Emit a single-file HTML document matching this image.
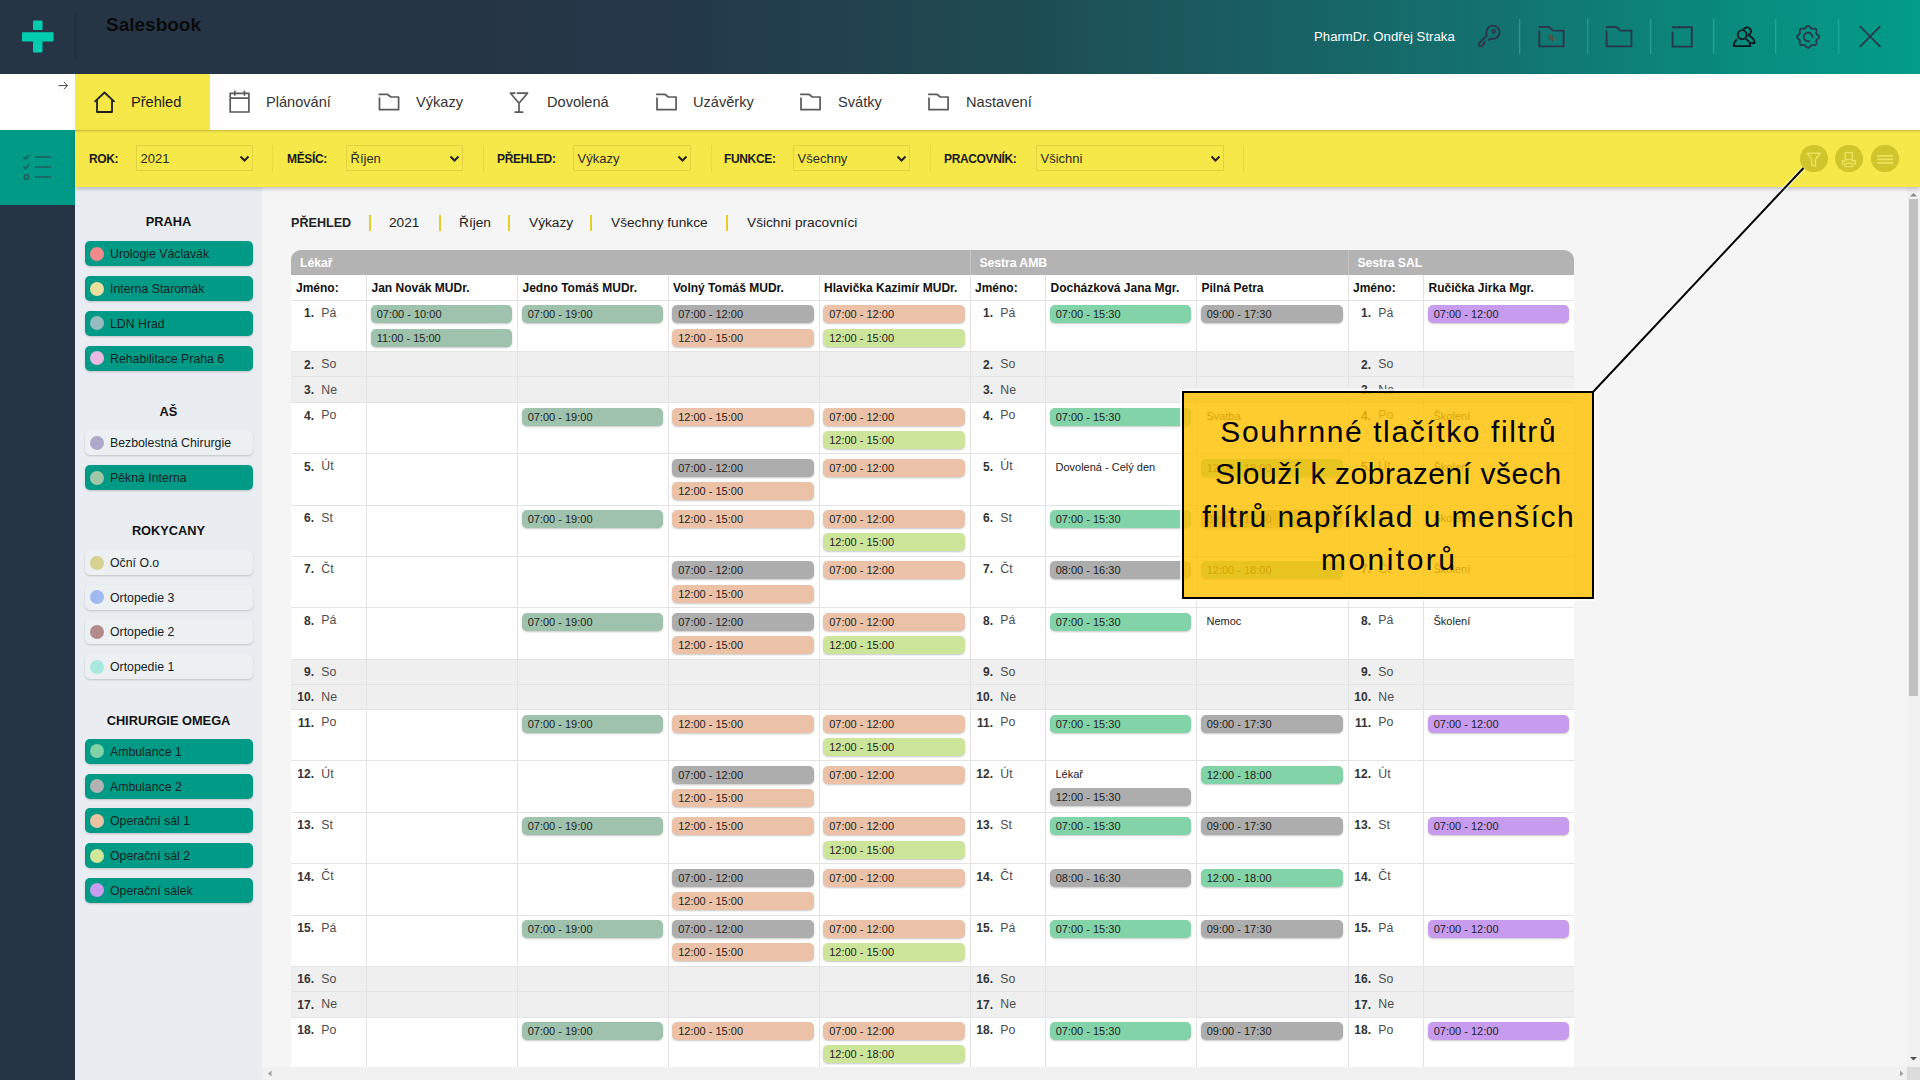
<!DOCTYPE html><html><head><meta charset="utf-8"><style>
*{box-sizing:border-box;margin:0;padding:0}
html,body{width:1920px;height:1080px;overflow:hidden;background:#f5f5f5;font-family:"Liberation Sans",sans-serif;color:#222}
.a{position:absolute}
#hdr{left:0;top:0;width:1920px;height:74px;background:linear-gradient(90deg,#263545 0%,#263545 24%,#24394a 36%,#1f4a52 52%,#137270 78%,#0a887c 88.5%,#039d89 100%)}
#nav{left:0;top:74px;width:1920px;height:56px;background:#fff}
#teal{left:0;top:130px;width:75px;height:75px;background:#009a86}
#side{left:0;top:205px;width:75px;height:875px;background:#263545}
#panel{left:75px;top:187px;width:187px;height:893px;background:#e9edf1}
#filter{left:75px;top:130px;width:1845px;height:57px;background:#f7e84a;box-shadow:0 2px 4px rgba(0,0,0,.22), inset 0 3px 3px -2px rgba(0,0,0,.22)}
.navt{font-size:14.6px;color:#333;top:94.2px;white-space:nowrap}
.flab{font-size:12px;font-weight:bold;color:#1a1a1a;top:152px;letter-spacing:-0.35px;white-space:nowrap}
.sel{top:145px;height:26px;border:1px solid #e2d141;font-size:13px;color:#2a2a2a;padding:4.7px 0 0 3.5px;white-space:nowrap}
.sel svg{position:absolute;right:2px;top:8.6px}
.fdiv{top:145px;width:1px;height:27px;background:#e9d940}
.cbtn{top:144.7px;width:27.8px;height:27.8px;border-radius:50%;background:#d0c52b;box-shadow:0 0 1px rgba(0,0,0,.06)}
.ghead{font-size:12.8px;font-weight:bold;color:#111;text-align:center;left:75px;width:187px;white-space:nowrap}
.item{left:85px;width:168px;height:25px;border-radius:5px;font-size:12.3px;color:#132323;white-space:nowrap;padding:6px 0 0 25px;box-shadow:0 1px 2px rgba(0,0,0,.18)}
.item.t{background:#009a86}
.item.l{background:#edf0f3}
.item i{position:absolute;left:5px;top:5.6px;width:14px;height:14px;border-radius:50%}
.bc{top:215px;font-size:13.7px;color:#222;white-space:nowrap}
.bsep{top:215px;width:2px;height:16px;background:#e3cf2c}
#tbl{left:291px;top:250px;width:1283px;height:817px;background:#fff}
.gh{top:0;height:25px;background:#b3b3b3;color:#fff;font-weight:bold;font-size:12.3px;padding:7px 0 0 9px;white-space:nowrap}
.nh{top:25px;height:25px;font-weight:bold;font-size:12px;color:#111;padding:6px 0 0 5px;white-space:nowrap}
.vl{width:1px;background:#e3e3e3}
.hl{height:1px;background:#e3e3e3}
.we{background:#efefef}
.dn{font-size:12px;font-weight:bold;color:#333;text-align:right;width:22px;white-space:nowrap}
.dd{font-size:12.3px;color:#4d4d4d;white-space:nowrap}
.ch{height:18px;border-radius:5px;font-size:11px;color:#222;padding:3px 0 0 6px;white-space:nowrap;box-shadow:0 1px 2px rgba(0,0,0,.22)}
.tx{font-size:11px;color:#222;white-space:nowrap}
</style></head><body><div id="hdr" class="a"></div>
<svg class="a" style="left:0;top:0" width="80" height="74"><rect x="33" y="20.6" width="9.5" height="9.4" rx="1" fill="#00cdb0"/><rect x="22" y="32.2" width="31.6" height="9.3" rx="1" fill="#00cdb0"/><rect x="33" y="41" width="9.5" height="11.5" rx="1" fill="#00cdb0"/><rect x="75" y="13" width="1" height="46" fill="#1d2b38"/></svg>
<div class="a" style="left:106px;top:13.5px;font-size:19px;font-weight:bold;color:#0b0b0b;white-space:nowrap">Salesbook</div>
<div class="a" style="left:1314px;top:28.8px;font-size:13.2px;color:#fff;white-space:nowrap">PharmDr. Ondřej Straka</div>
<svg class="a" style="left:0;top:0" width="1920" height="74"><path d="M1488.6 39.9 C1490 39 1491.6 38.7 1493 38.8 A6.6 6.6 0 1 0 1486.4 32.4 C1486.4 33.5 1486.6 34.5 1486.9 35.5 L1479 43.3 C1478.4 44.2 1478.6 46.3 1480.6 46.4 L1482.4 46.2 L1482.6 44.6 L1484.4 43.9 L1484.4 41.8" fill="none" stroke="#283848" stroke-width="1.9" stroke-linejoin="round" stroke-linecap="round"/><circle cx="1493.5" cy="31.3" r="1.6" fill="none" stroke="#283848" stroke-width="1.6"/><path d="M1539.3 27 L1548.1 27 C1549 27 1549.6 27.3 1550.2 27.9 L1552.6 30.2 C1553 30.5 1553.4 30.6 1554 30.6 L1563.6 30.6 L1563.6 46.4 L1539.3 46.4 L1539.3 31.5" fill="none" stroke="#283848" stroke-width="1.9" stroke-linejoin="round" stroke-linecap="round"/><text x="1548.4" y="41.4" font-family="Liberation Sans" font-weight="bold" font-size="8.2" fill="#7a3b2b">N</text><path d="M1606.6 27 L1615.6 27 C1616.5 27 1617.1 27.3 1617.7 27.9 L1620.1 30.2 C1620.5 30.5 1620.9 30.6 1621.5 30.6 L1631.4 30.6 L1631.4 46.4 L1606.6 46.4 L1606.6 31.5" fill="none" stroke="#283848" stroke-width="1.9" stroke-linejoin="round" stroke-linecap="round"/><path d="M1672.6 27.2 L1691.8 27.2 L1691.8 46.6 L1672.6 46.6 L1672.6 32.2" fill="none" stroke="#283848" stroke-width="1.9" stroke-linecap="round"/><g fill="none" stroke="#0a181c" stroke-width="1.8" stroke-linecap="round" stroke-linejoin="round"><circle cx="1742.2" cy="34.7" r="4.5"/><path d="M1743.8 28.9 A4 4 0 1 1 1748.2 35.1"/><path d="M1736.5 39.6 C1734.6 41.3 1733.8 43.5 1733.8 46.2 L1750.4 46.2 C1750.3 43.5 1749 41 1746.2 39.2"/><path d="M1749.4 35.9 C1752.5 37.3 1754.5 40 1754.6 43.1 L1750.4 43.1"/></g><path d="M1808.10 25.85 L1808.81 26.01 L1809.47 26.47 L1810.05 27.09 L1810.55 27.75 L1811.02 28.29 L1811.53 28.63 L1812.12 28.75 L1812.84 28.69 L1813.66 28.59 L1814.51 28.55 L1815.29 28.70 L1815.91 29.09 L1816.30 29.71 L1816.45 30.49 L1816.41 31.34 L1816.31 32.16 L1816.25 32.88 L1816.37 33.47 L1816.71 33.98 L1817.25 34.45 L1817.91 34.95 L1818.53 35.53 L1818.99 36.19 L1819.15 36.90 L1818.99 37.61 L1818.53 38.27 L1817.91 38.85 L1817.25 39.35 L1816.71 39.82 L1816.37 40.33 L1816.25 40.92 L1816.31 41.64 L1816.41 42.46 L1816.45 43.31 L1816.30 44.09 L1815.91 44.71 L1815.29 45.10 L1814.51 45.25 L1813.66 45.21 L1812.84 45.11 L1812.12 45.05 L1811.53 45.17 L1811.02 45.51 L1810.55 46.05 L1810.05 46.71 L1809.47 47.33 L1808.81 47.79 L1808.10 47.95 L1807.39 47.79 L1806.73 47.33 L1806.15 46.71 L1805.65 46.05 L1805.18 45.51 L1804.67 45.17 L1804.08 45.05 L1803.36 45.11 L1802.54 45.21 L1801.69 45.25 L1800.91 45.10 L1800.29 44.71 L1799.90 44.09 L1799.75 43.31 L1799.79 42.46 L1799.89 41.64 L1799.95 40.92 L1799.83 40.33 L1799.49 39.82 L1798.95 39.35 L1798.29 38.85 L1797.67 38.27 L1797.21 37.61 L1797.05 36.90 L1797.21 36.19 L1797.67 35.53 L1798.29 34.95 L1798.95 34.45 L1799.49 33.98 L1799.83 33.47 L1799.95 32.88 L1799.89 32.16 L1799.79 31.34 L1799.75 30.49 L1799.90 29.71 L1800.29 29.09 L1800.91 28.70 L1801.69 28.55 L1802.54 28.59 L1803.36 28.69 L1804.08 28.75 L1804.67 28.63 L1805.18 28.29 L1805.65 27.75 L1806.15 27.09 L1806.73 26.47 L1807.39 26.01 L1808.10 25.85 Z" fill="none" stroke="#283848" stroke-width="1.8" stroke-linejoin="round"/><path d="M1812.4 37 A4.3 4.3 0 1 0 1809.3 41.1" fill="none" stroke="#283848" stroke-width="1.8" stroke-linecap="round"/><path d="M1860.3 26.6 L1879.9 46.4 M1879.9 26.6 L1860.3 46.4" stroke="#283848" stroke-width="1.7" stroke-linecap="round"/><rect x="1519" y="19" width="1.3" height="35" fill="#35b8a6" opacity=".55"/><rect x="1587" y="19" width="1.3" height="35" fill="#35b8a6" opacity=".55"/><rect x="1650" y="19" width="1.3" height="35" fill="#35b8a6" opacity=".55"/><rect x="1713" y="19" width="1.3" height="35" fill="#35b8a6" opacity=".55"/><rect x="1775" y="19" width="1.3" height="35" fill="#35b8a6" opacity=".55"/><rect x="1838" y="19" width="1.3" height="35" fill="#35b8a6" opacity=".55"/></svg>
<div id="nav" class="a"></div>
<div class="a" style="left:75px;top:74px;width:135px;height:56px;background:#f7e84a"></div>
<svg class="a" style="left:0;top:74px" width="80" height="30"><path d="M58.5 11.6 L67.5 11.6 M64 8 L67.5 11.6 L64 15.2" fill="none" stroke="#444" stroke-width="1"/></svg>
<svg class="a" style="left:0;top:74px" width="1100" height="56"><path d="M94.6 27.8 L104.5 18.5 L114.5 27.8 M97 25.5 L97 38 L112 38 L112 25.5" fill="none" stroke="#1f1f1f" stroke-width="1.8" stroke-linejoin="round"/><g fill="none" stroke="#5a5a5a" stroke-width="1.7" stroke-linecap="round"><path d="M230.2 28.6 L230.2 19.3 L248.9 19.3 L248.9 38 L230.2 38 L230.2 28.6 M230.2 24.1 L248.9 24.1 M234.8 17.3 L234.8 20.9 M244.4 17.3 L244.4 20.9"/></g><path d="M379.3 20.3 L387.3 20.3 L390.9 23 L398.6 23 L398.6 35.7 L379.5 35.7 L379.5 24" fill="none" stroke="#5a5a5a" stroke-width="1.7" stroke-linejoin="round" stroke-linecap="round"/><path d="M510.4 19.1 L514.9 19.1 M517.5 19.1 L527.6 19.1 M510.6 19.3 L519 29.2 L527.4 19.3 M519 29.2 L519 38.1 M515.1 38.1 L522.7 38.1" fill="none" stroke="#5a5a5a" stroke-width="1.7" stroke-linecap="round" stroke-linejoin="round"/><path d="M656.8 20.3 L664.8 20.3 L668.4 23 L676.1 23 L676.1 35.7 L657.0 35.7 L657.0 24" fill="none" stroke="#5a5a5a" stroke-width="1.7" stroke-linejoin="round" stroke-linecap="round"/><path d="M800.8 20.3 L808.8 20.3 L812.4 23 L820.1 23 L820.1 35.7 L801.0 35.7 L801.0 24" fill="none" stroke="#5a5a5a" stroke-width="1.7" stroke-linejoin="round" stroke-linecap="round"/><path d="M928.8 20.3 L936.8 20.3 L940.4 23 L948.1 23 L948.1 35.7 L929.0 35.7 L929.0 24" fill="none" stroke="#5a5a5a" stroke-width="1.7" stroke-linejoin="round" stroke-linecap="round"/></svg>
<div class="a navt" style="left:131px;color:#1a1a1a">Přehled</div>
<div class="a navt" style="left:266px;color:#333">Plánování</div>
<div class="a navt" style="left:416px;color:#333">Výkazy</div>
<div class="a navt" style="left:547px;color:#333">Dovolená</div>
<div class="a navt" style="left:693px;color:#333">Uzávěrky</div>
<div class="a navt" style="left:838px;color:#333">Svátky</div>
<div class="a navt" style="left:966px;color:#333">Nastavení</div>
<div id="teal" class="a"></div>
<div id="side" class="a"></div>
<svg class="a" style="left:0;top:130px" width="75" height="75"><g fill="none" stroke="#1e5f5a" stroke-width="1.6"><path d="M23.5 27 L25.5 29 L29 25 M23.5 36.5 L25.5 38.5 L29 34.5"/><circle cx="26.5" cy="47" r="2.3"/><path d="M35 27 L51.5 27 M35 37 L51.5 37 M35 47 L51.5 47"/></g></svg>
<div id="panel" class="a"></div>
<div class="a" style="left:1907px;top:187px;width:13px;height:880px;background:#f1f1f1"></div>
<div class="a" style="left:1909px;top:199px;width:9px;height:497px;background:#c1c1c1"></div>
<svg class="a" style="left:1907px;top:187px" width="13" height="880"><path d="M3 9.5 L6.5 6 L10 9.5 Z" fill="#8a8a8a"/><path d="M3 870 L6.5 873.5 L10 870 Z" fill="#505050"/></svg>
<div class="a" style="left:262px;top:1067px;width:1645px;height:13px;background:#f1f1f1"></div>
<div class="a" style="left:1907px;top:1067px;width:13px;height:13px;background:#dcdcdc"></div>
<svg class="a" style="left:262px;top:1067px" width="1645" height="13"><path d="M9.5 3.5 L6 6.5 L9.5 9.5 Z" fill="#a0a0a0"/><path d="M1638 3.5 L1641.5 6.5 L1638 9.5 Z" fill="#a0a0a0"/></svg>
<div id="filter" class="a"></div>
<div class="a flab" style="left:89px">ROK:</div>
<div class="a sel" style="left:136px;width:117px">2021<svg width="11" height="8"><path d="M1.5 1.5 L5.5 5.5 L9.5 1.5" fill="none" stroke="#222" stroke-width="2"/></svg></div>
<div class="a flab" style="left:287px">MĚSÍC:</div>
<div class="a sel" style="left:346px;width:117px">Říjen<svg width="11" height="8"><path d="M1.5 1.5 L5.5 5.5 L9.5 1.5" fill="none" stroke="#222" stroke-width="2"/></svg></div>
<div class="a flab" style="left:497px">PŘEHLED:</div>
<div class="a sel" style="left:573px;width:118px">Výkazy<svg width="11" height="8"><path d="M1.5 1.5 L5.5 5.5 L9.5 1.5" fill="none" stroke="#222" stroke-width="2"/></svg></div>
<div class="a flab" style="left:724px">FUNKCE:</div>
<div class="a sel" style="left:793px;width:117px">Všechny<svg width="11" height="8"><path d="M1.5 1.5 L5.5 5.5 L9.5 1.5" fill="none" stroke="#222" stroke-width="2"/></svg></div>
<div class="a flab" style="left:944px">PRACOVNÍK:</div>
<div class="a sel" style="left:1036px;width:188px">Všichni<svg width="11" height="8"><path d="M1.5 1.5 L5.5 5.5 L9.5 1.5" fill="none" stroke="#222" stroke-width="2"/></svg></div>
<div class="a fdiv" style="left:272px"></div>
<div class="a fdiv" style="left:483px"></div>
<div class="a fdiv" style="left:711px"></div>
<div class="a fdiv" style="left:930px"></div>
<div class="a fdiv" style="left:1243px"></div>
<div class="a cbtn" style="left:1799.8px"></div>
<div class="a cbtn" style="left:1834.8px"></div>
<div class="a cbtn" style="left:1870.8px"></div>
<svg class="a" style="left:1790px;top:140px" width="120" height="40"><path d="M17.2 13.3 L30.2 13.3 L25.5 19.2 L25.5 26.3 L21.8 25 L21.8 19.2 Z" fill="none" stroke="#ece262" stroke-width="1.4" stroke-linejoin="round"/><g fill="none" stroke="#ece262" stroke-width="1.4"><rect x="55.2" y="12.6" width="7.2" height="7"/><path d="M52.6 25 L52.6 20.8 L56 20.8 M61.6 20.8 L65.4 20.8 L65.4 25"/><rect x="54.6" y="23.4" width="8.4" height="3.2" rx="1.5"/></g><path d="M87 15.8 L103 15.8 M87 19.3 L103 19.3 M87 22.9 L103 22.9" stroke="#ece262" stroke-width="1.7"/></svg>
<div class="a ghead" style="top:213.5px">PRAHA</div>
<div class="a item t" style="top:241.4px"><i style="background:#f28a8a"></i>Urologie Václavák</div>
<div class="a item t" style="top:276.1px"><i style="background:#ecdf9e"></i>Interna Staromák</div>
<div class="a item t" style="top:310.8px"><i style="background:#95bcc1"></i>LDN Hrad</div>
<div class="a item t" style="top:345.5px"><i style="background:#e9b9e1"></i>Rehabilitace Praha 6</div>
<div class="a ghead" style="top:403.5px">AŠ</div>
<div class="a item l" style="top:430.4px"><i style="background:#aea7c9"></i>Bezbolestná Chirurgie</div>
<div class="a item t" style="top:465.1px"><i style="background:#a2c7a8"></i>Pěkná Interna</div>
<div class="a ghead" style="top:522.5px">ROKYCANY</div>
<div class="a item l" style="top:550.0px"><i style="background:#d8d08f"></i>Oční O.o</div>
<div class="a item l" style="top:584.7px"><i style="background:#a0b9f0"></i>Ortopedie 3</div>
<div class="a item l" style="top:619.4px"><i style="background:#b38b8b"></i>Ortopedie 2</div>
<div class="a item l" style="top:654.1px"><i style="background:#a8e8df"></i>Ortopedie 1</div>
<div class="a ghead" style="top:712.5px">CHIRURGIE OMEGA</div>
<div class="a item t" style="top:738.9px"><i style="background:#82d2a8"></i>Ambulance 1</div>
<div class="a item t" style="top:773.6px"><i style="background:#b2b2b2"></i>Ambulance 2</div>
<div class="a item t" style="top:808.3px"><i style="background:#ebc2a4"></i>Operační sál 1</div>
<div class="a item t" style="top:843.0px"><i style="background:#d2e69a"></i>Operační sál 2</div>
<div class="a item t" style="top:877.7px"><i style="background:#c99cf0"></i>Operační sálek</div>
<div class="a bc" style="left:291px;font-weight:bold;font-size:12.6px;top:216px">PŘEHLED</div>
<div class="a bsep" style="left:369px"></div>
<div class="a bsep" style="left:439px"></div>
<div class="a bsep" style="left:508px"></div>
<div class="a bsep" style="left:590px"></div>
<div class="a bsep" style="left:726px"></div>
<div class="a bc" style="left:389px">2021</div>
<div class="a bc" style="left:459px">Říjen</div>
<div class="a bc" style="left:529px">Výkazy</div>
<div class="a bc" style="left:611px">Všechny funkce</div>
<div class="a bc" style="left:747px">Všichni pracovníci</div>
<div class="a" style="left:291px;top:250px;width:1283px;height:25px;background:#b3b3b3;border-radius:10px 10px 0 0"></div><div class="a" style="left:291px;top:275px;width:1283px;height:792px;background:#fff"></div><div class="a" style="left:300px;top:256px;color:#fff;font-weight:bold;font-size:12.3px;white-space:nowrap;letter-spacing:-0.1px">Lékař</div><div class="a" style="left:979.5px;top:256px;color:#fff;font-weight:bold;font-size:12.3px;white-space:nowrap;letter-spacing:-0.1px">Sestra AMB</div><div class="a" style="left:1357.5px;top:256px;color:#fff;font-weight:bold;font-size:12.3px;white-space:nowrap;letter-spacing:-0.1px">Sestra SAL</div><div class="a" style="left:970px;top:250px;width:1px;height:25px;background:#c4c4c4"></div><div class="a" style="left:1348px;top:250px;width:1px;height:25px;background:#c4c4c4"></div><div class="a we" style="left:291px;top:351.7px;width:1283px;height:25.4px"></div><div class="a we" style="left:291px;top:377.1px;width:1283px;height:25.4px"></div><div class="a we" style="left:291px;top:659.0px;width:1283px;height:25.4px"></div><div class="a we" style="left:291px;top:684.4px;width:1283px;height:25.4px"></div><div class="a we" style="left:291px;top:966.3px;width:1283px;height:25.4px"></div><div class="a we" style="left:291px;top:991.7px;width:1283px;height:25.4px"></div><div class="a hl" style="left:291px;top:300px;width:1283px"></div><div class="a hl" style="left:291px;top:351.2px;width:1283px"></div><div class="a hl" style="left:291px;top:376.0px;width:1283px"></div><div class="a hl" style="left:291px;top:402.0px;width:1283px"></div><div class="a hl" style="left:291px;top:453.3px;width:1283px"></div><div class="a hl" style="left:291px;top:504.6px;width:1283px"></div><div class="a hl" style="left:291px;top:555.9px;width:1283px"></div><div class="a hl" style="left:291px;top:607.2px;width:1283px"></div><div class="a hl" style="left:291px;top:658.5px;width:1283px"></div><div class="a hl" style="left:291px;top:683.9px;width:1283px"></div><div class="a hl" style="left:291px;top:709.3px;width:1283px"></div><div class="a hl" style="left:291px;top:760.0px;width:1283px"></div><div class="a hl" style="left:291px;top:811.9px;width:1283px"></div><div class="a hl" style="left:291px;top:863.2px;width:1283px"></div><div class="a hl" style="left:291px;top:914.5px;width:1283px"></div><div class="a hl" style="left:291px;top:965.8px;width:1283px"></div><div class="a hl" style="left:291px;top:991.2px;width:1283px"></div><div class="a hl" style="left:291px;top:1016.6px;width:1283px"></div><div class="a vl" style="left:366.0px;top:275px;height:792px"></div><div class="a vl" style="left:517.0px;top:275px;height:792px"></div><div class="a vl" style="left:667.5px;top:275px;height:792px"></div><div class="a vl" style="left:818.5px;top:275px;height:792px"></div><div class="a vl" style="left:969.5px;top:275px;height:792px"></div><div class="a vl" style="left:1045.0px;top:275px;height:792px"></div><div class="a vl" style="left:1196.0px;top:275px;height:792px"></div><div class="a vl" style="left:1347.5px;top:275px;height:792px"></div><div class="a vl" style="left:1423.0px;top:275px;height:792px"></div><div class="a nh" style="left:291.0px;top:275px">Jméno:</div><div class="a nh" style="left:366.5px;top:275px">Jan Novák MUDr.</div><div class="a nh" style="left:517.5px;top:275px">Jedno Tomáš MUDr.</div><div class="a nh" style="left:668.0px;top:275px">Volný Tomáš MUDr.</div><div class="a nh" style="left:819.0px;top:275px">Hlavička Kazimír MUDr.</div><div class="a nh" style="left:970.0px;top:275px">Jméno:</div><div class="a nh" style="left:1045.5px;top:275px">Docházková Jana Mgr.</div><div class="a nh" style="left:1196.5px;top:275px">Pilná Petra</div><div class="a nh" style="left:1348.0px;top:275px">Jméno:</div><div class="a nh" style="left:1423.5px;top:275px">Ručička Jirka Mgr.</div><div class="a dn" style="left:292.0px;top:306.4px">1.</div><div class="a dd" style="left:321.3px;top:305.9px">Pá</div><div class="a ch" style="left:370.7px;top:305.4px;width:141.4px;background:#9fc2ad">07:00 - 10:00</div><div class="a ch" style="left:370.7px;top:328.6px;width:141.4px;background:#9fc2ad">11:00 - 15:00</div><div class="a ch" style="left:521.7px;top:305.4px;width:140.9px;background:#9fc2ad">07:00 - 19:00</div><div class="a ch" style="left:672.2px;top:305.4px;width:141.4px;background:#adadad">07:00 - 12:00</div><div class="a ch" style="left:672.2px;top:328.6px;width:141.4px;background:#ebc2a7">12:00 - 15:00</div><div class="a ch" style="left:823.2px;top:305.4px;width:141.4px;background:#ebc2a7">07:00 - 12:00</div><div class="a ch" style="left:823.2px;top:328.6px;width:141.4px;background:#cde59b">12:00 - 15:00</div><div class="a dn" style="left:971.0px;top:306.4px">1.</div><div class="a dd" style="left:1000.3px;top:305.9px">Pá</div><div class="a ch" style="left:1049.7px;top:305.4px;width:141.4px;background:#82d4a8">07:00 - 15:30</div><div class="a ch" style="left:1200.7px;top:305.4px;width:141.9px;background:#adadad">09:00 - 17:30</div><div class="a dn" style="left:1349.0px;top:306.4px">1.</div><div class="a dd" style="left:1378.3px;top:305.9px">Pá</div><div class="a ch" style="left:1427.7px;top:305.4px;width:140.9px;background:#c79cef">07:00 - 12:00</div><div class="a dn" style="left:292.0px;top:357.7px">2.</div><div class="a dd" style="left:321.3px;top:357.2px">So</div><div class="a dn" style="left:971.0px;top:357.7px">2.</div><div class="a dd" style="left:1000.3px;top:357.2px">So</div><div class="a dn" style="left:1349.0px;top:357.7px">2.</div><div class="a dd" style="left:1378.3px;top:357.2px">So</div><div class="a dn" style="left:292.0px;top:383.1px">3.</div><div class="a dd" style="left:321.3px;top:382.6px">Ne</div><div class="a dn" style="left:971.0px;top:383.1px">3.</div><div class="a dd" style="left:1000.3px;top:382.6px">Ne</div><div class="a dn" style="left:1349.0px;top:383.1px">3.</div><div class="a dd" style="left:1378.3px;top:382.6px">Ne</div><div class="a dn" style="left:292.0px;top:408.5px">4.</div><div class="a dd" style="left:321.3px;top:408.0px">Po</div><div class="a ch" style="left:521.7px;top:407.5px;width:140.9px;background:#9fc2ad">07:00 - 19:00</div><div class="a ch" style="left:672.2px;top:407.5px;width:141.4px;background:#ebc2a7">12:00 - 15:00</div><div class="a ch" style="left:823.2px;top:407.5px;width:141.4px;background:#ebc2a7">07:00 - 12:00</div><div class="a ch" style="left:823.2px;top:430.7px;width:141.4px;background:#cde59b">12:00 - 15:00</div><div class="a dn" style="left:971.0px;top:408.5px">4.</div><div class="a dd" style="left:1000.3px;top:408.0px">Po</div><div class="a ch" style="left:1049.7px;top:407.5px;width:141.4px;background:#82d4a8">07:00 - 15:30</div><div class="a tx" style="left:1206.5px;top:409.5px">Svatba</div><div class="a dn" style="left:1349.0px;top:408.5px">4.</div><div class="a dd" style="left:1378.3px;top:408.0px">Po</div><div class="a tx" style="left:1433.5px;top:409.5px">Školení</div><div class="a dn" style="left:292.0px;top:459.8px">5.</div><div class="a dd" style="left:321.3px;top:459.3px">Út</div><div class="a ch" style="left:672.2px;top:458.8px;width:141.4px;background:#adadad">07:00 - 12:00</div><div class="a ch" style="left:672.2px;top:482.0px;width:141.4px;background:#ebc2a7">12:00 - 15:00</div><div class="a ch" style="left:823.2px;top:458.8px;width:141.4px;background:#ebc2a7">07:00 - 12:00</div><div class="a dn" style="left:971.0px;top:459.8px">5.</div><div class="a dd" style="left:1000.3px;top:459.3px">Út</div><div class="a tx" style="left:1055.5px;top:460.8px">Dovolená - Celý den</div><div class="a ch" style="left:1200.7px;top:458.8px;width:141.9px;background:#82d4a8">12:00 - 18:00</div><div class="a dn" style="left:1349.0px;top:459.8px">5.</div><div class="a dd" style="left:1378.3px;top:459.3px">Út</div><div class="a tx" style="left:1433.5px;top:460.8px">Školení</div><div class="a dn" style="left:292.0px;top:511.1px">6.</div><div class="a dd" style="left:321.3px;top:510.6px">St</div><div class="a ch" style="left:521.7px;top:510.1px;width:140.9px;background:#9fc2ad">07:00 - 19:00</div><div class="a ch" style="left:672.2px;top:510.1px;width:141.4px;background:#ebc2a7">12:00 - 15:00</div><div class="a ch" style="left:823.2px;top:510.1px;width:141.4px;background:#ebc2a7">07:00 - 12:00</div><div class="a ch" style="left:823.2px;top:533.3px;width:141.4px;background:#cde59b">12:00 - 15:00</div><div class="a dn" style="left:971.0px;top:511.1px">6.</div><div class="a dd" style="left:1000.3px;top:510.6px">St</div><div class="a ch" style="left:1049.7px;top:510.1px;width:141.4px;background:#82d4a8">07:00 - 15:30</div><div class="a ch" style="left:1200.7px;top:510.1px;width:141.9px;background:#adadad">09:00 - 17:30</div><div class="a dn" style="left:1349.0px;top:511.1px">6.</div><div class="a dd" style="left:1378.3px;top:510.6px">St</div><div class="a tx" style="left:1433.5px;top:512.1px">Školení</div><div class="a dn" style="left:292.0px;top:562.4px">7.</div><div class="a dd" style="left:321.3px;top:561.9px">Čt</div><div class="a ch" style="left:672.2px;top:561.4px;width:141.4px;background:#adadad">07:00 - 12:00</div><div class="a ch" style="left:672.2px;top:584.6px;width:141.4px;background:#ebc2a7">12:00 - 15:00</div><div class="a ch" style="left:823.2px;top:561.4px;width:141.4px;background:#ebc2a7">07:00 - 12:00</div><div class="a dn" style="left:971.0px;top:562.4px">7.</div><div class="a dd" style="left:1000.3px;top:561.9px">Čt</div><div class="a ch" style="left:1049.7px;top:561.4px;width:141.4px;background:#adadad">08:00 - 16:30</div><div class="a ch" style="left:1200.7px;top:561.4px;width:141.9px;background:#82d4a8">12:00 - 18:00</div><div class="a dn" style="left:1349.0px;top:562.4px">7.</div><div class="a dd" style="left:1378.3px;top:561.9px">Čt</div><div class="a tx" style="left:1433.5px;top:563.4px">Školení</div><div class="a dn" style="left:292.0px;top:613.7px">8.</div><div class="a dd" style="left:321.3px;top:613.2px">Pá</div><div class="a ch" style="left:521.7px;top:612.7px;width:140.9px;background:#9fc2ad">07:00 - 19:00</div><div class="a ch" style="left:672.2px;top:612.7px;width:141.4px;background:#adadad">07:00 - 12:00</div><div class="a ch" style="left:672.2px;top:635.9px;width:141.4px;background:#ebc2a7">12:00 - 15:00</div><div class="a ch" style="left:823.2px;top:612.7px;width:141.4px;background:#ebc2a7">07:00 - 12:00</div><div class="a ch" style="left:823.2px;top:635.9px;width:141.4px;background:#cde59b">12:00 - 15:00</div><div class="a dn" style="left:971.0px;top:613.7px">8.</div><div class="a dd" style="left:1000.3px;top:613.2px">Pá</div><div class="a ch" style="left:1049.7px;top:612.7px;width:141.4px;background:#82d4a8">07:00 - 15:30</div><div class="a tx" style="left:1206.5px;top:614.7px">Nemoc</div><div class="a dn" style="left:1349.0px;top:613.7px">8.</div><div class="a dd" style="left:1378.3px;top:613.2px">Pá</div><div class="a tx" style="left:1433.5px;top:614.7px">Školení</div><div class="a dn" style="left:292.0px;top:665.0px">9.</div><div class="a dd" style="left:321.3px;top:664.5px">So</div><div class="a dn" style="left:971.0px;top:665.0px">9.</div><div class="a dd" style="left:1000.3px;top:664.5px">So</div><div class="a dn" style="left:1349.0px;top:665.0px">9.</div><div class="a dd" style="left:1378.3px;top:664.5px">So</div><div class="a dn" style="left:292.0px;top:690.4px">10.</div><div class="a dd" style="left:321.3px;top:689.9px">Ne</div><div class="a dn" style="left:971.0px;top:690.4px">10.</div><div class="a dd" style="left:1000.3px;top:689.9px">Ne</div><div class="a dn" style="left:1349.0px;top:690.4px">10.</div><div class="a dd" style="left:1378.3px;top:689.9px">Ne</div><div class="a dn" style="left:292.0px;top:715.8px">11.</div><div class="a dd" style="left:321.3px;top:715.3px">Po</div><div class="a ch" style="left:521.7px;top:714.8px;width:140.9px;background:#9fc2ad">07:00 - 19:00</div><div class="a ch" style="left:672.2px;top:714.8px;width:141.4px;background:#ebc2a7">12:00 - 15:00</div><div class="a ch" style="left:823.2px;top:714.8px;width:141.4px;background:#ebc2a7">07:00 - 12:00</div><div class="a ch" style="left:823.2px;top:738.0px;width:141.4px;background:#cde59b">12:00 - 15:00</div><div class="a dn" style="left:971.0px;top:715.8px">11.</div><div class="a dd" style="left:1000.3px;top:715.3px">Po</div><div class="a ch" style="left:1049.7px;top:714.8px;width:141.4px;background:#82d4a8">07:00 - 15:30</div><div class="a ch" style="left:1200.7px;top:714.8px;width:141.9px;background:#adadad">09:00 - 17:30</div><div class="a dn" style="left:1349.0px;top:715.8px">11.</div><div class="a dd" style="left:1378.3px;top:715.3px">Po</div><div class="a ch" style="left:1427.7px;top:714.8px;width:140.9px;background:#c79cef">07:00 - 12:00</div><div class="a dn" style="left:292.0px;top:767.1px">12.</div><div class="a dd" style="left:321.3px;top:766.6px">Út</div><div class="a ch" style="left:672.2px;top:766.1px;width:141.4px;background:#adadad">07:00 - 12:00</div><div class="a ch" style="left:672.2px;top:789.3px;width:141.4px;background:#ebc2a7">12:00 - 15:00</div><div class="a ch" style="left:823.2px;top:766.1px;width:141.4px;background:#ebc2a7">07:00 - 12:00</div><div class="a dn" style="left:971.0px;top:767.1px">12.</div><div class="a dd" style="left:1000.3px;top:766.6px">Út</div><div class="a tx" style="left:1055.5px;top:768.1px">Lékař</div><div class="a ch" style="left:1049.7px;top:788.1px;width:141.4px;background:#adadad">12:00 - 15:30</div><div class="a ch" style="left:1200.7px;top:766.1px;width:141.9px;background:#82d4a8">12:00 - 18:00</div><div class="a dn" style="left:1349.0px;top:767.1px">12.</div><div class="a dd" style="left:1378.3px;top:766.6px">Út</div><div class="a dn" style="left:292.0px;top:818.4px">13.</div><div class="a dd" style="left:321.3px;top:817.9px">St</div><div class="a ch" style="left:521.7px;top:817.4px;width:140.9px;background:#9fc2ad">07:00 - 19:00</div><div class="a ch" style="left:672.2px;top:817.4px;width:141.4px;background:#ebc2a7">12:00 - 15:00</div><div class="a ch" style="left:823.2px;top:817.4px;width:141.4px;background:#ebc2a7">07:00 - 12:00</div><div class="a ch" style="left:823.2px;top:840.6px;width:141.4px;background:#cde59b">12:00 - 15:00</div><div class="a dn" style="left:971.0px;top:818.4px">13.</div><div class="a dd" style="left:1000.3px;top:817.9px">St</div><div class="a ch" style="left:1049.7px;top:817.4px;width:141.4px;background:#82d4a8">07:00 - 15:30</div><div class="a ch" style="left:1200.7px;top:817.4px;width:141.9px;background:#adadad">09:00 - 17:30</div><div class="a dn" style="left:1349.0px;top:818.4px">13.</div><div class="a dd" style="left:1378.3px;top:817.9px">St</div><div class="a ch" style="left:1427.7px;top:817.4px;width:140.9px;background:#c79cef">07:00 - 12:00</div><div class="a dn" style="left:292.0px;top:869.7px">14.</div><div class="a dd" style="left:321.3px;top:869.2px">Čt</div><div class="a ch" style="left:672.2px;top:868.7px;width:141.4px;background:#adadad">07:00 - 12:00</div><div class="a ch" style="left:672.2px;top:891.9px;width:141.4px;background:#ebc2a7">12:00 - 15:00</div><div class="a ch" style="left:823.2px;top:868.7px;width:141.4px;background:#ebc2a7">07:00 - 12:00</div><div class="a dn" style="left:971.0px;top:869.7px">14.</div><div class="a dd" style="left:1000.3px;top:869.2px">Čt</div><div class="a ch" style="left:1049.7px;top:868.7px;width:141.4px;background:#adadad">08:00 - 16:30</div><div class="a ch" style="left:1200.7px;top:868.7px;width:141.9px;background:#82d4a8">12:00 - 18:00</div><div class="a dn" style="left:1349.0px;top:869.7px">14.</div><div class="a dd" style="left:1378.3px;top:869.2px">Čt</div><div class="a dn" style="left:292.0px;top:921.0px">15.</div><div class="a dd" style="left:321.3px;top:920.5px">Pá</div><div class="a ch" style="left:521.7px;top:920.0px;width:140.9px;background:#9fc2ad">07:00 - 19:00</div><div class="a ch" style="left:672.2px;top:920.0px;width:141.4px;background:#adadad">07:00 - 12:00</div><div class="a ch" style="left:672.2px;top:943.2px;width:141.4px;background:#ebc2a7">12:00 - 15:00</div><div class="a ch" style="left:823.2px;top:920.0px;width:141.4px;background:#ebc2a7">07:00 - 12:00</div><div class="a ch" style="left:823.2px;top:943.2px;width:141.4px;background:#cde59b">12:00 - 15:00</div><div class="a dn" style="left:971.0px;top:921.0px">15.</div><div class="a dd" style="left:1000.3px;top:920.5px">Pá</div><div class="a ch" style="left:1049.7px;top:920.0px;width:141.4px;background:#82d4a8">07:00 - 15:30</div><div class="a ch" style="left:1200.7px;top:920.0px;width:141.9px;background:#adadad">09:00 - 17:30</div><div class="a dn" style="left:1349.0px;top:921.0px">15.</div><div class="a dd" style="left:1378.3px;top:920.5px">Pá</div><div class="a ch" style="left:1427.7px;top:920.0px;width:140.9px;background:#c79cef">07:00 - 12:00</div><div class="a dn" style="left:292.0px;top:972.3px">16.</div><div class="a dd" style="left:321.3px;top:971.8px">So</div><div class="a dn" style="left:971.0px;top:972.3px">16.</div><div class="a dd" style="left:1000.3px;top:971.8px">So</div><div class="a dn" style="left:1349.0px;top:972.3px">16.</div><div class="a dd" style="left:1378.3px;top:971.8px">So</div><div class="a dn" style="left:292.0px;top:997.7px">17.</div><div class="a dd" style="left:321.3px;top:997.2px">Ne</div><div class="a dn" style="left:971.0px;top:997.7px">17.</div><div class="a dd" style="left:1000.3px;top:997.2px">Ne</div><div class="a dn" style="left:1349.0px;top:997.7px">17.</div><div class="a dd" style="left:1378.3px;top:997.2px">Ne</div><div class="a dn" style="left:292.0px;top:1023.1px">18.</div><div class="a dd" style="left:321.3px;top:1022.6px">Po</div><div class="a ch" style="left:521.7px;top:1022.1px;width:140.9px;background:#9fc2ad">07:00 - 19:00</div><div class="a ch" style="left:672.2px;top:1022.1px;width:141.4px;background:#ebc2a7">12:00 - 15:00</div><div class="a ch" style="left:823.2px;top:1022.1px;width:141.4px;background:#ebc2a7">07:00 - 12:00</div><div class="a ch" style="left:823.2px;top:1045.3px;width:141.4px;background:#cde59b">12:00 - 18:00</div><div class="a dn" style="left:971.0px;top:1023.1px">18.</div><div class="a dd" style="left:1000.3px;top:1022.6px">Po</div><div class="a ch" style="left:1049.7px;top:1022.1px;width:141.4px;background:#82d4a8">07:00 - 15:30</div><div class="a ch" style="left:1200.7px;top:1022.1px;width:141.9px;background:#adadad">09:00 - 17:30</div><div class="a dn" style="left:1349.0px;top:1023.1px">18.</div><div class="a dd" style="left:1378.3px;top:1022.6px">Po</div><div class="a ch" style="left:1427.7px;top:1022.1px;width:140.9px;background:#c79cef">07:00 - 12:00</div>
<svg class="a" style="left:0;top:0" width="1920" height="1080"><line x1="1593" y1="392" x2="1803.5" y2="168" stroke="#fff" stroke-width="4" opacity=".8"/><rect x="1182" y="391" width="412" height="208" fill="none" stroke="#fff" stroke-width="4" opacity=".8"/><rect x="1183" y="392" width="410" height="206" fill="rgba(255,192,0,0.81)" stroke="#000" stroke-width="2"/><line x1="1593" y1="392" x2="1803.5" y2="168" stroke="#000" stroke-width="2"/></svg>
<div class="a" style="left:1183px;width:410px;text-align:center;top:414.5px;font-size:30px;letter-spacing:1.60px;text-indent:1.60px;color:#000;white-space:nowrap">Souhrnné tlačítko filtrů</div>
<div class="a" style="left:1183px;width:410px;text-align:center;top:457.2px;font-size:30px;letter-spacing:0.55px;text-indent:0.55px;color:#000;white-space:nowrap">Slouží k zobrazení všech</div>
<div class="a" style="left:1183px;width:410px;text-align:center;top:499.9px;font-size:30px;letter-spacing:1.45px;text-indent:1.45px;color:#000;white-space:nowrap">filtrů například u menších</div>
<div class="a" style="left:1183px;width:410px;text-align:center;top:542.6px;font-size:30px;letter-spacing:2.45px;text-indent:2.45px;color:#000;white-space:nowrap">monitorů</div></body></html>
